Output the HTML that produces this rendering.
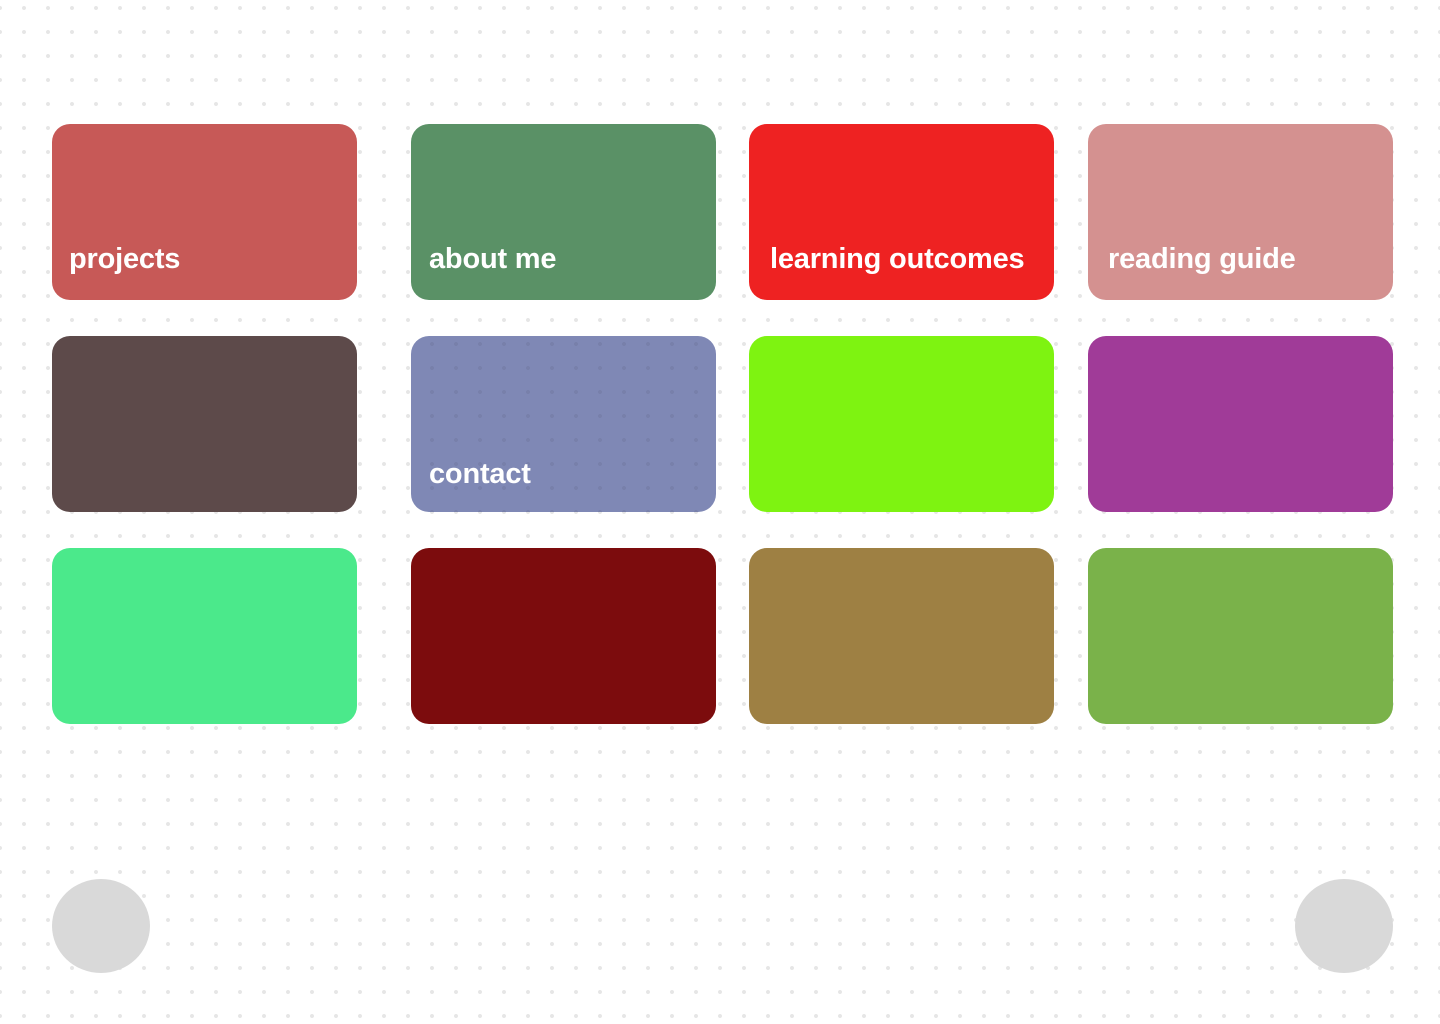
<!DOCTYPE html>
<html><head><style>
html,body{margin:0;padding:0;width:1440px;height:1024px;overflow:hidden;background:#fff;}
body{background-image:radial-gradient(circle,#e6e6e6 1.8px,transparent 2.2px);background-size:24px 24px;background-position:-12px -4px;position:relative;font-family:"Liberation Sans",sans-serif;}
.c{position:absolute;width:305px;height:176px;border-radius:18px;}
.t{position:absolute;left:17px;color:#fff;font-weight:bold;font-size:29px;letter-spacing:-0.2px;}
.circ{position:absolute;width:98px;height:94px;border-radius:50%;background:#d9d9d9;top:879px;}
</style></head><body>
<div class="c" style="left:52px;top:124px;background:#c75957"><span class="t" style="top:119px">projects</span></div>
<div class="c" style="left:411px;top:124px;background:#5a9166"><span class="t" style="top:119px;left:18px">about me</span></div>
<div class="c" style="left:749px;top:124px;background:#ee2222"><span class="t" style="top:119px;left:21px">learning outcomes</span></div>
<div class="c" style="left:1088px;top:124px;background:#d49190"><span class="t" style="top:119px;left:20px">reading guide</span></div>
<div class="c" style="left:52px;top:336px;background:#5d4a4a"></div>
<div class="c" style="left:411px;top:336px;background:#7f88b5;background-image:radial-gradient(circle,rgba(0,0,0,0.06) 1.8px,transparent 2.2px);background-size:24px 24px;background-position:-423px -340px"><span class="t" style="top:122px;left:18px">contact</span></div>
<div class="c" style="left:749px;top:336px;background:#7ef311"></div>
<div class="c" style="left:1088px;top:336px;background:#a03b98"></div>
<div class="c" style="left:52px;top:548px;background:#4be98b"></div>
<div class="c" style="left:411px;top:548px;background:#7c0c0d"></div>
<div class="c" style="left:749px;top:548px;background:#9e8043"></div>
<div class="c" style="left:1088px;top:548px;background:#7ab24a"></div>
<div class="circ" style="left:52px"></div>
<div class="circ" style="left:1295px"></div>
</body></html>
